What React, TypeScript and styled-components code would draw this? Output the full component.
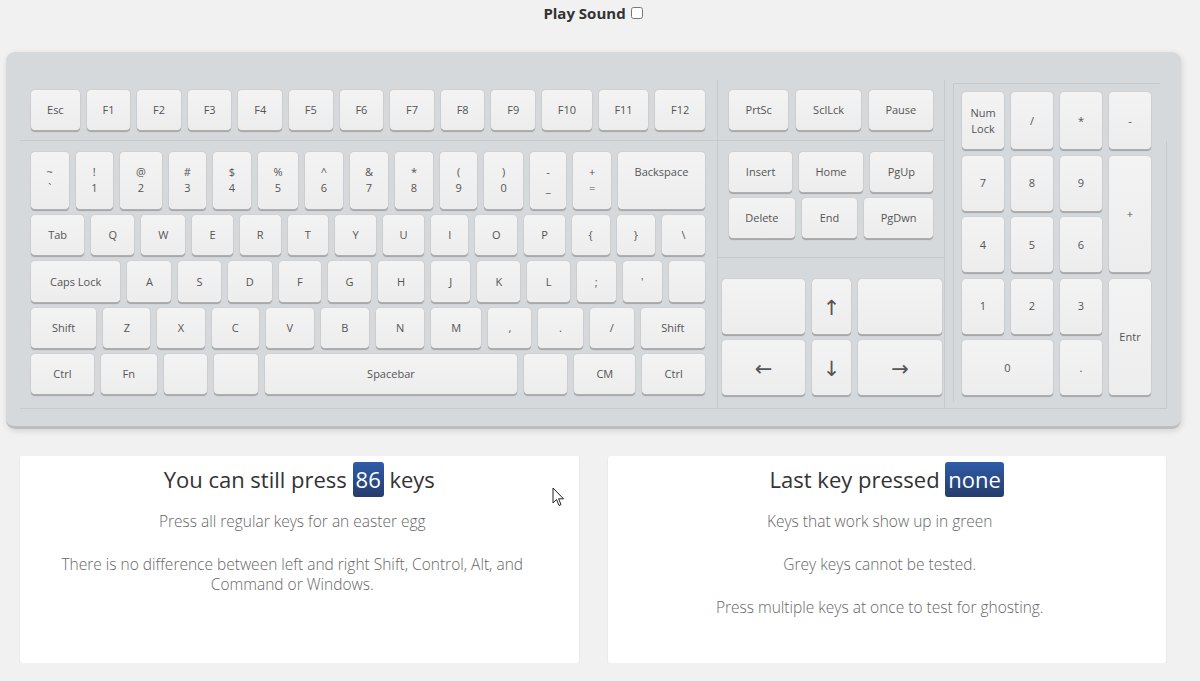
import { createGlobalStyle } from 'styled-components';
import styled from 'styled-components';

const GlobalStyle = createGlobalStyle`
  body {
    margin: 0;
    background: #f1f1f1;
    font-family: "Open Sans", "DejaVu Sans", sans-serif;
    color: #333;
  }
`;

const Header = styled.div`
  display: flex;
  justify-content: center;
  align-items: center;
  column-gap: 5px;
  padding: 1px 14px 0 0;
  height: 24px;
  font-size: 15px;
  font-weight: 700;
  color: #333;

  input {
    margin: 0;
    width: 12px;
    height: 12px;
  }
`;

const Case = styled.div`
  margin: 27px 19px 0 6px;
  padding: 28px 14px 17px;
  background: #d6d9dc;
  border-radius: 9px;
  border-bottom: 3px solid #bcbfc2;
  box-shadow: 1px 2px 6px rgba(0, 0, 0, 0.12);
`;

const Sections = styled.div`
  display: flex;
  border-bottom: 1px solid #c6cacd;
`;

const MainBlock = styled.div`
  width: 697px;
  border-right: 1px solid #c6cacd;
`;

const FnRow = styled.div`
  display: flex;
  column-gap: 7px;
  height: 40px;
  padding: 10px 12px 10px 11px;
  border-bottom: 1px solid #c6cacd;
`;

const Typing = styled.div`
  display: flex;
  flex-direction: column;
  row-gap: 6px;
  padding: 11px 12px 14px 11px;
`;

const Row = styled.div<{ $h: number }>`
  display: flex;
  column-gap: 7px;
  height: ${(p) => p.$h}px;
`;

const Key = styled.div<{ $w?: number; $top?: boolean; $big?: boolean }>`
  flex: ${(p) => p.$w ?? 1} 1 0;
  min-width: 0;
  display: flex;
  flex-direction: column;
  align-items: center;
  justify-content: ${(p) => (p.$top ? 'flex-start' : 'center')};
  padding-top: ${(p) => (p.$top ? '12px' : '0')};
  box-sizing: border-box;
  background: linear-gradient(180deg, #f3f3f3 0%, #ededed 100%);
  border-radius: 4px;
  box-shadow: 0 0 1px rgba(0, 0, 0, 0.3), 0 1px 0 #b4b4b4, 0 2px 1px #a3a3a3;
  color: #555;
  font-size: ${(p) => (p.$big ? '21px' : '11px')};
  line-height: 16px;
  white-space: nowrap;
  user-select: none;
`;

const NavBlock = styled.div`
  width: 226px;
  border-right: 1px solid #c6cacd;
`;

const NavTop = styled.div`
  display: flex;
  column-gap: 8px;
  height: 40px;
  padding: 10px 11px;
  border-bottom: 1px solid #c6cacd;
`;

const NavMid = styled.div`
  display: flex;
  flex-direction: column;
  row-gap: 6px;
  padding: 11px 11px 19px;
  border-bottom: 1px solid #c6cacd;
`;

const Arrows = styled.div`
  display: grid;
  grid-template-columns: 83px 39px 84px;
  grid-template-rows: 55px 55px;
  gap: 6px 7px;
  padding: 21px 3px 0 4px;
`;

const NumBlock = styled.div`
  flex: 1;
  position: relative;

  &::after {
    content: '';
    position: absolute;
    right: 0;
    top: 61px;
    bottom: 0;
    width: 1px;
    background: #c6cacd;
  }
`;

const NumInner = styled.div`
  margin: 3px 7px 6px 8px;
  padding: 8px 9px 7px 8px;
  border-top: 1px solid #c6cacd;
  border-left: 1px solid #c6cacd;
  display: grid;
  grid-template-columns: repeat(4, 1fr);
  grid-template-rows: 57px repeat(4, 55px);
  gap: 6.5px 7px;
`;

const NumKey = styled(Key)<{ $col?: string; $row?: string }>`
  grid-column: ${(p) => p.$col ?? 'auto'};
  grid-row: ${(p) => p.$row ?? 'auto'};
`;

const Cards = styled.div`
  display: flex;
  column-gap: 29px;
  margin: 27px 34px 0 20px;
`;

const Card = styled.div`
  position: relative;
  flex: 1;
  height: 207px;
  box-sizing: border-box;
  padding: 6px 38px 0;
  background: #fff;
  border-radius: 2px;
  box-shadow: 0 1px 2px rgba(0, 0, 0, 0.1);
  text-align: center;
`;

const Heading = styled.div`
  font-size: 22px;
  line-height: 35px;
  color: #333;
  margin-bottom: 14px;
`;

const Badge = styled.span`
  display: inline-block;
  padding: 0 3px;
  color: #fff;
  background: linear-gradient(180deg, #2f5ca8 0%, #253c6b 100%);
  border-radius: 3px;
`;

const Text = styled.p`
  margin: 0 0 23px;
  padding-right: 14px;
  font-size: 15.5px;
  font-weight: 300;
  line-height: 20px;
  color: #666;
`;

const Cursor = styled.svg`
  position: absolute;
  left: 532px;
  top: 31px;
`;

type K = [string, number] | [string, number, string];

const fnKeys: K[] = [
  ['Esc', 48], ['F1', 43], ['F2', 43], ['F3', 43], ['F4', 43], ['F5', 43], ['F6', 43],
  ['F7', 43], ['F8', 43], ['F9', 43], ['F10', 49], ['F11', 49], ['F12', 49],
];

const numberRow: K[] = [
  ['~', 37, '`'], ['!', 37, '1'], ['@', 41, '2'], ['#', 37, '3'], ['$', 37, '4'], ['%', 40, '5'],
  ['^', 37, '6'], ['&', 38, '7'], ['*', 37, '8'], ['(', 37, '9'], [')', 38, '0'], ['-', 36, '_'],
  ['+', 37, '='], ['Backspace', 86],
];

const rows: { h: number; keys: K[] }[] = [
  {
    h: 40,
    keys: [
      ['Tab', 53], ['Q', 43], ['W', 44], ['E', 40], ['R', 41], ['T', 40], ['Y', 41], ['U', 41],
      ['I', 37], ['O', 42], ['P', 40], ['{', 38], ['}', 38], ['\\', 43],
    ],
  },
  {
    h: 41,
    keys: [
      ['Caps Lock', 89], ['A', 44], ['S', 42], ['D', 44], ['F', 42], ['G', 43], ['H', 46],
      ['J', 39], ['K', 43], ['L', 42], [';', 39], ["'", 39], ['', 36],
    ],
  },
  {
    h: 40,
    keys: [
      ['Shift', 65], ['Z', 47], ['X', 47], ['C', 47], ['V', 48], ['B', 48], ['N', 48], ['M', 50],
      [',', 43], ['.', 44], ['/', 44], ['Shift', 64],
    ],
  },
  {
    h: 40,
    keys: [
      ['Ctrl', 63], ['Fn', 56], ['', 44], ['', 44], ['Spacebar', 252], ['', 44], ['CM', 61],
      ['Ctrl', 63],
    ],
  },
];

const App = () => (
  <>
    <GlobalStyle />
    <Header>
      Play Sound <input type="checkbox" />
    </Header>
    <Case>
      <Sections>
        <MainBlock>
          <FnRow>
            {fnKeys.map(([label, w]) => (
              <Key key={label} $w={w}>{label}</Key>
            ))}
          </FnRow>
          <Typing>
            <Row $h={57}>
              {numberRow.map(([top, w, bottom], i) => (
                <Key key={i} $w={w} $top>
                  <span>{top}</span>
                  {bottom && <span>{bottom}</span>}
                </Key>
              ))}
            </Row>
            {rows.map((row, r) => (
              <Row key={r} $h={row.h}>
                {row.keys.map(([label, w], i) => (
                  <Key key={i} $w={w}>{label}</Key>
                ))}
              </Row>
            ))}
          </Typing>
        </MainBlock>
        <NavBlock>
          <NavTop>
            <Key $w={60}>PrtSc</Key>
            <Key $w={65}>SclLck</Key>
            <Key $w={65}>Pause</Key>
          </NavTop>
          <NavMid>
            <Row $h={40}>
              <Key>Insert</Key>
              <Key>Home</Key>
              <Key>PgUp</Key>
            </Row>
            <Row $h={40}>
              <Key $w={66}>Delete</Key>
              <Key $w={56}>End</Key>
              <Key $w={69}>PgDwn</Key>
            </Row>
          </NavMid>
          <Arrows>
            <Key />
            <Key $big>↑</Key>
            <Key />
            <Key $big>←</Key>
            <Key $big>↓</Key>
            <Key $big>→</Key>
          </Arrows>
        </NavBlock>
        <NumBlock>
          <NumInner>
            <NumKey>
              <span>Num</span>
              <span>Lock</span>
            </NumKey>
            <NumKey>/</NumKey>
            <NumKey>*</NumKey>
            <NumKey>-</NumKey>
            <NumKey>7</NumKey>
            <NumKey>8</NumKey>
            <NumKey>9</NumKey>
            <NumKey $col="4" $row="2 / span 2">+</NumKey>
            <NumKey>4</NumKey>
            <NumKey>5</NumKey>
            <NumKey>6</NumKey>
            <NumKey>1</NumKey>
            <NumKey>2</NumKey>
            <NumKey>3</NumKey>
            <NumKey $col="4" $row="4 / span 2">Entr</NumKey>
            <NumKey $col="1 / span 2">0</NumKey>
            <NumKey>.</NumKey>
          </NumInner>
        </NumBlock>
      </Sections>
    </Case>
    <Cards>
      <Card>
        <Heading>
          You can still press <Badge>86</Badge> keys
        </Heading>
        <Text>Press all regular keys for an easter egg</Text>
        <Text>There is no difference between left and right Shift, Control, Alt, and Command or Windows.</Text>
        <Cursor width="13" height="20" viewBox="0 0 13 20">
          <path d="M1 1 L1 16 L4.5 12.5 L7 18.5 L9 17.6 L6.6 11.8 L11.5 11.8 Z" fill="#fff" stroke="#222" strokeWidth="1" strokeLinejoin="round" />
        </Cursor>
      </Card>
      <Card>
        <Heading>
          Last key pressed <Badge>none</Badge>
        </Heading>
        <Text>Keys that work show up in green</Text>
        <Text>Grey keys cannot be tested.</Text>
        <Text>Press multiple keys at once to test for ghosting.</Text>
      </Card>
    </Cards>
  </>
);

export default App;
